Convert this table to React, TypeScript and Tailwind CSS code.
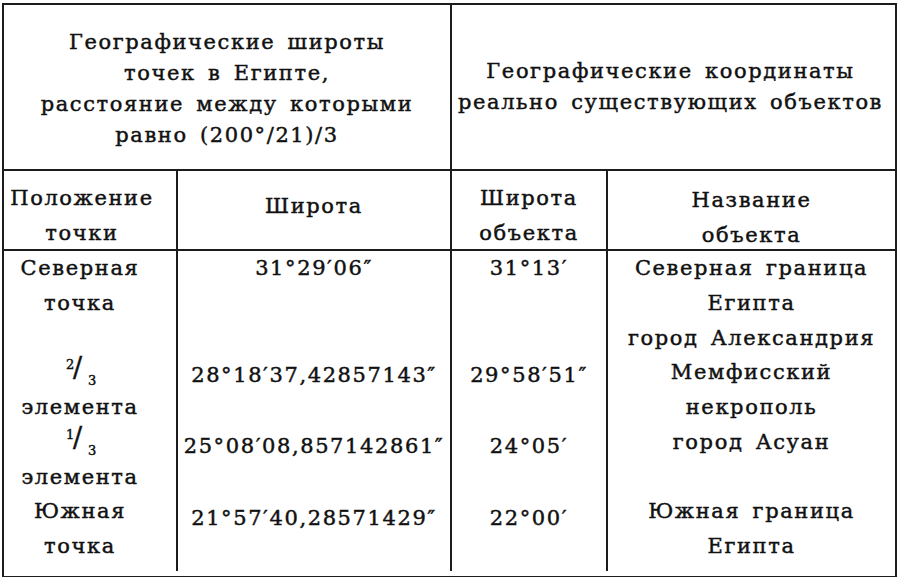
import React from "react";

const Frac = ({ n }: { n: string }) => (
  <span className="relative inline-block w-[34px] h-[34px] align-top">
    <span className="absolute left-[3px] top-[3px] text-[13px] leading-none tracking-normal">{n}</span>
    <span className="absolute left-[10px] top-[-1px] text-[27px] leading-none tracking-normal">/</span>
    <span className="absolute left-[25px] top-[19px] text-[13px] leading-none tracking-normal">3</span>
  </span>
);

export default function App() {
  const font = { fontFamily: '"DejaVu Serif", "Liberation Serif", serif' };
  return (
    <div className="w-[900px] h-[577px] bg-white text-[#111111] overflow-hidden" style={font}>
      <div className="ml-[2px] mt-[3px] w-[895px] border-2 border-[#1c1c1c] text-[21px] tracking-[1.6px] [word-spacing:4px] [-webkit-text-stroke:0.45px_#111111]">
        {/* header */}
        <div className="grid grid-cols-[448px_443px] h-[166px] border-b-2 border-[#1c1c1c]">
          <div className="border-r-2 border-[#1c1c1c] flex flex-col items-center justify-center leading-[31px] text-center pt-[4px]">
            <div>Географические широты</div>
            <div>точек в Египте,</div>
            <div>расстояние между которыми</div>
            <div>равно (200°/21)/3</div>
          </div>
          <div className="flex flex-col items-center justify-center leading-[31px] text-center pr-[6px]">
            <div>Географические координаты</div>
            <div>реально существующих объектов</div>
          </div>
        </div>
        {/* subheader */}
        <div className="grid grid-cols-[174px_274px_156px_287px] h-[80px] border-b-2 border-[#1c1c1c] leading-[35px] text-center">
          <div className="border-r-2 border-[#1c1c1c] flex flex-col items-center justify-center pt-[8px] pr-[16px]">
            <div>Положение</div>
            <div>точки</div>
          </div>
          <div className="border-r-2 border-[#1c1c1c] flex flex-col items-center justify-center pb-[12px]">
            <div>Широта</div>
          </div>
          <div className="border-r-2 border-[#1c1c1c] flex flex-col items-center justify-center pt-[8px]">
            <div>Широта</div>
            <div>объекта</div>
          </div>
          <div className="flex flex-col items-center justify-center pt-[12px]">
            <div>Название</div>
            <div>объекта</div>
          </div>
        </div>
        {/* body */}
        <div className="grid grid-cols-[174px_274px_156px_287px] leading-[34.75px] text-center pb-[5px]">
          <div className="border-r-2 border-[#1c1c1c] flex flex-col items-center pr-[20px]">
            <div>Северная</div>
            <div>точка</div>
            <div>&nbsp;</div>
            <div><Frac n="2" /></div>
            <div>элемента</div>
            <div><Frac n="1" /></div>
            <div>элемента</div>
            <div>Южная</div>
            <div>точка</div>
          </div>
          <div className="border-r-2 border-[#1c1c1c] flex flex-col items-center">
            <div>31°29′06″</div>
            <div>&nbsp;</div>
            <div>&nbsp;</div>
            <div className="pt-[3px]">28°18′37,42857143″</div>
            <div>&nbsp;</div>
            <div className="pt-[1px]">25°08′08,857142861″</div>
            <div>&nbsp;</div>
            <div className="pt-[3px]">21°57′40,28571429″</div>
            <div>&nbsp;</div>
          </div>
          <div className="border-r-2 border-[#1c1c1c] flex flex-col items-center">
            <div>31°13′</div>
            <div>&nbsp;</div>
            <div>&nbsp;</div>
            <div className="pt-[3px]">29°58′51″</div>
            <div>&nbsp;</div>
            <div className="pt-[1px]">24°05′</div>
            <div>&nbsp;</div>
            <div className="pt-[3px]">22°00′</div>
            <div>&nbsp;</div>
          </div>
          <div className="flex flex-col items-center">
            <div>Северная граница</div>
            <div>Египта</div>
            <div>город Александрия</div>
            <div>Мемфисский</div>
            <div>некрополь</div>
            <div>город Асуан</div>
            <div>&nbsp;</div>
            <div>Южная граница</div>
            <div>Египта</div>
          </div>
        </div>
      </div>
    </div>
  );
}
